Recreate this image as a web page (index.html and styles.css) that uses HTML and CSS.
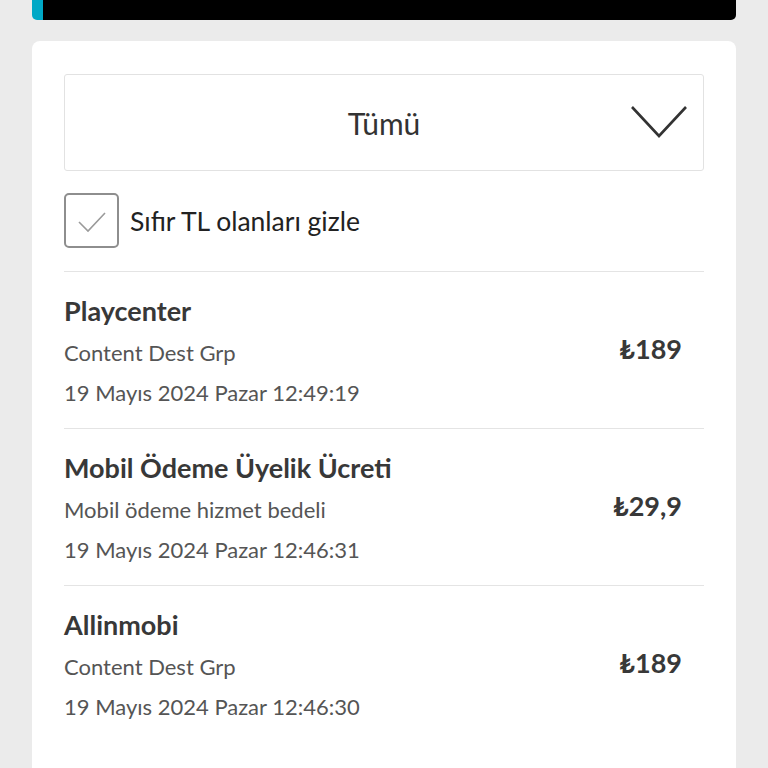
FILE: index.html
```html
<!DOCTYPE html>
<html lang="tr">
<head>
<meta charset="utf-8">
<link rel="stylesheet" href="styles.css">
</head>
<body>
<div class="topbar"></div>
<main class="card">
  <div class="select">
    <span></span>
    <span class="select-text">Tümü</span>
    <svg class="chevron" width="58" height="36" viewBox="0 0 58 36"><path d="M2 3 L29 32 L56 3" fill="none" stroke="#333" stroke-width="2.6"/></svg>
  </div>
  <label class="check-row">
    <span class="box"><svg width="32" height="24" viewBox="0 0 32 24"><path d="M3 12 L12 21 L29 3" fill="none" stroke="#9a9a9a" stroke-width="1.6"/></svg></span>
    <span class="check-label">Sıfır TL olanları gizle</span>
  </label>
  <ul class="list">
    <li class="item">
      <div class="info">
        <div class="title">Playcenter</div>
        <div class="sub">Content Dest Grp</div>
        <div class="sub">19 Mayıs 2024 Pazar 12:49:19</div>
      </div>
      <div class="price">₺189</div>
    </li>
    <li class="item">
      <div class="info">
        <div class="title">Mobil Ödeme Üyelik Ücreti</div>
        <div class="sub">Mobil ödeme hizmet bedeli</div>
        <div class="sub">19 Mayıs 2024 Pazar 12:46:31</div>
      </div>
      <div class="price">₺29,9</div>
    </li>
    <li class="item">
      <div class="info">
        <div class="title">Allinmobi</div>
        <div class="sub">Content Dest Grp</div>
        <div class="sub">19 Mayıs 2024 Pazar 12:46:30</div>
      </div>
      <div class="price">₺189</div>
    </li>
  </ul>
</main>
</body>
</html>
```
FILE: styles.css
```css
html, body { margin: 0; padding: 0; }
body {
  background: #ebebeb;
  font-family: Lato, "Noto Sans", sans-serif;
  color: #333;
  height: 768px;
  overflow: hidden;
}
.topbar {
  margin: 0 32px;
  height: 20px;
  background: #000;
  border-left: 11px solid #00a8c6;
  border-radius: 0 0 5px 5px;
}
.card {
  margin: 21px 32px 0;
  background: #fff;
  border-radius: 8px 8px 0 0;
  padding: 33px 32px 0;
  height: 727px;
  box-sizing: border-box;
  overflow: hidden;
}
.select {
  height: 97px;
  box-sizing: border-box;
  border: 1px solid #e2e2e2;
  border-radius: 3px;
  display: grid;
  grid-template-columns: 1fr auto 1fr;
  align-items: center;
  padding-right: 15px;
  padding-left: 15px;
}
.select-text { font-size: 30px; color: #333; }
.chevron { justify-self: end; margin-top: -2px; }
.check-row {
  display: flex;
  align-items: center;
  margin-top: 22px;
  gap: 11px;
}
.box {
  width: 55px;
  height: 55px;
  box-sizing: border-box;
  border: 2px solid #8e8e8e;
  border-radius: 5px;
  display: flex;
  align-items: center;
  justify-content: center;
}
.box svg { margin-top: 2px; }
.check-label { font-size: 26.5px; color: #222; }
.list {
  list-style: none;
  margin: 23px 0 0;
  padding: 0;
}
.item {
  border-top: 1px solid #e4e4e4;
  display: flex;
  align-items: center;
  justify-content: space-between;
  padding: 22px 22px 15px 0;
}
.title { font-size: 27px; font-weight: 700; line-height: 34px; margin-bottom: 5px; color: #383838; }
.sub { font-size: 22px; line-height: 40px; color: #555; }
.price { font-size: 27px; font-weight: 700; color: #383838; margin-top: -10px; }
```
